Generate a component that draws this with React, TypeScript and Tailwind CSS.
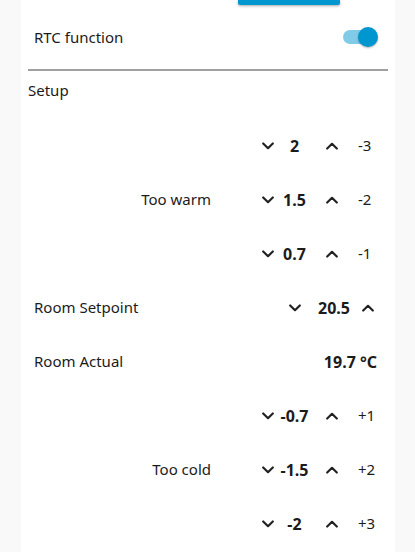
import React from "react";

const Down = () => (
  <svg width="12" height="8" viewBox="0 0 12 8">
    <path d="M1.2 1.5 L6 6.2 L10.8 1.5" fill="none" stroke="#222" strokeWidth="2.2" strokeLinecap="round" strokeLinejoin="round" />
  </svg>
);
const Up = () => (
  <svg width="12" height="8" viewBox="0 0 12 8">
    <path d="M1.2 6.5 L6 1.8 L10.8 6.5" fill="none" stroke="#222" strokeWidth="2.2" strokeLinecap="round" strokeLinejoin="round" />
  </svg>
);

const rows = [
  { label: "", v: "2", o: "-3" },
  { label: "Too warm", v: "1.5", o: "-2" },
  { label: "", v: "0.7", o: "-1" },
];
const rows2 = [
  { label: "", v: "-0.7", o: "+1" },
  { label: "Too cold", v: "-1.5", o: "+2" },
  { label: "", v: "-2", o: "+3" },
];

function OffsetRow({ label, v, o }: { label: string; v: string; o: string }) {
  return (
    <div className="flex h-[54px] items-center">
      <div className="w-[190px] text-right">{label}</div>
      <div className="ml-[47px] flex w-[20px] justify-center"><Down /></div>
      <div className="w-[33px] text-center text-[16px] font-bold">{v}</div>
      <div className="ml-[11px] flex w-[20px] justify-center"><Up /></div>
      <div className="ml-[16px]">{o}</div>
    </div>
  );
}

export default function App() {
  return (
    <div
      className="flex min-h-[552px] bg-[#f9f9f9] text-[15px] text-[#1b1b1b]"
      style={{ fontFamily: '"Noto Sans", "Open Sans", sans-serif' }}
    >
      <div className="ml-[21px] w-[374px] bg-white">
        <div className="ml-[217px] h-[5px] w-[102px] rounded-b-[2px] bg-[#0097d1] shadow-[0_1px_3px_rgba(0,0,0,0.35)]" />
        <div className="flex h-[64px] items-center justify-between pl-[13px] pr-[17px]">
          <span>RTC function</span>
          <div className="relative h-[20px] w-[35px]">
            <div className="absolute left-0 top-[3px] h-[14px] w-[30px] rounded-full bg-[#80cbe8]" />
            <div className="absolute right-0 top-0 h-[20px] w-[20px] rounded-full bg-[#0097d1] shadow-[0_1px_2px_rgba(0,0,0,0.3)]" />
          </div>
        </div>
        <div className="mx-[7px] h-[1.5px] bg-[#a0a0a0]" />
        <div className="flex h-[40px] items-center pl-[7px]">Setup</div>
        <div className="mt-[8px]">
          {rows.map((r, i) => (
            <OffsetRow key={i} {...r} />
          ))}
          <div className="flex h-[54px] items-center">
            <div className="w-[264px] pl-[13px]">Room Setpoint</div>
            <div className="flex w-[20px] justify-center"><Down /></div>
            <div className="ml-[5px] w-[48px] text-center text-[16px] font-bold">20.5</div>
            <div className="flex w-[20px] justify-center"><Up /></div>
          </div>
          <div className="flex h-[54px] items-center justify-between pl-[13px] pr-[18px]">
            <span>Room Actual</span>
            <span className="text-[16px] font-bold">19.7 °C</span>
          </div>
          {rows2.map((r, i) => (
            <OffsetRow key={i} {...r} />
          ))}
        </div>
      </div>
    </div>
  );
}
